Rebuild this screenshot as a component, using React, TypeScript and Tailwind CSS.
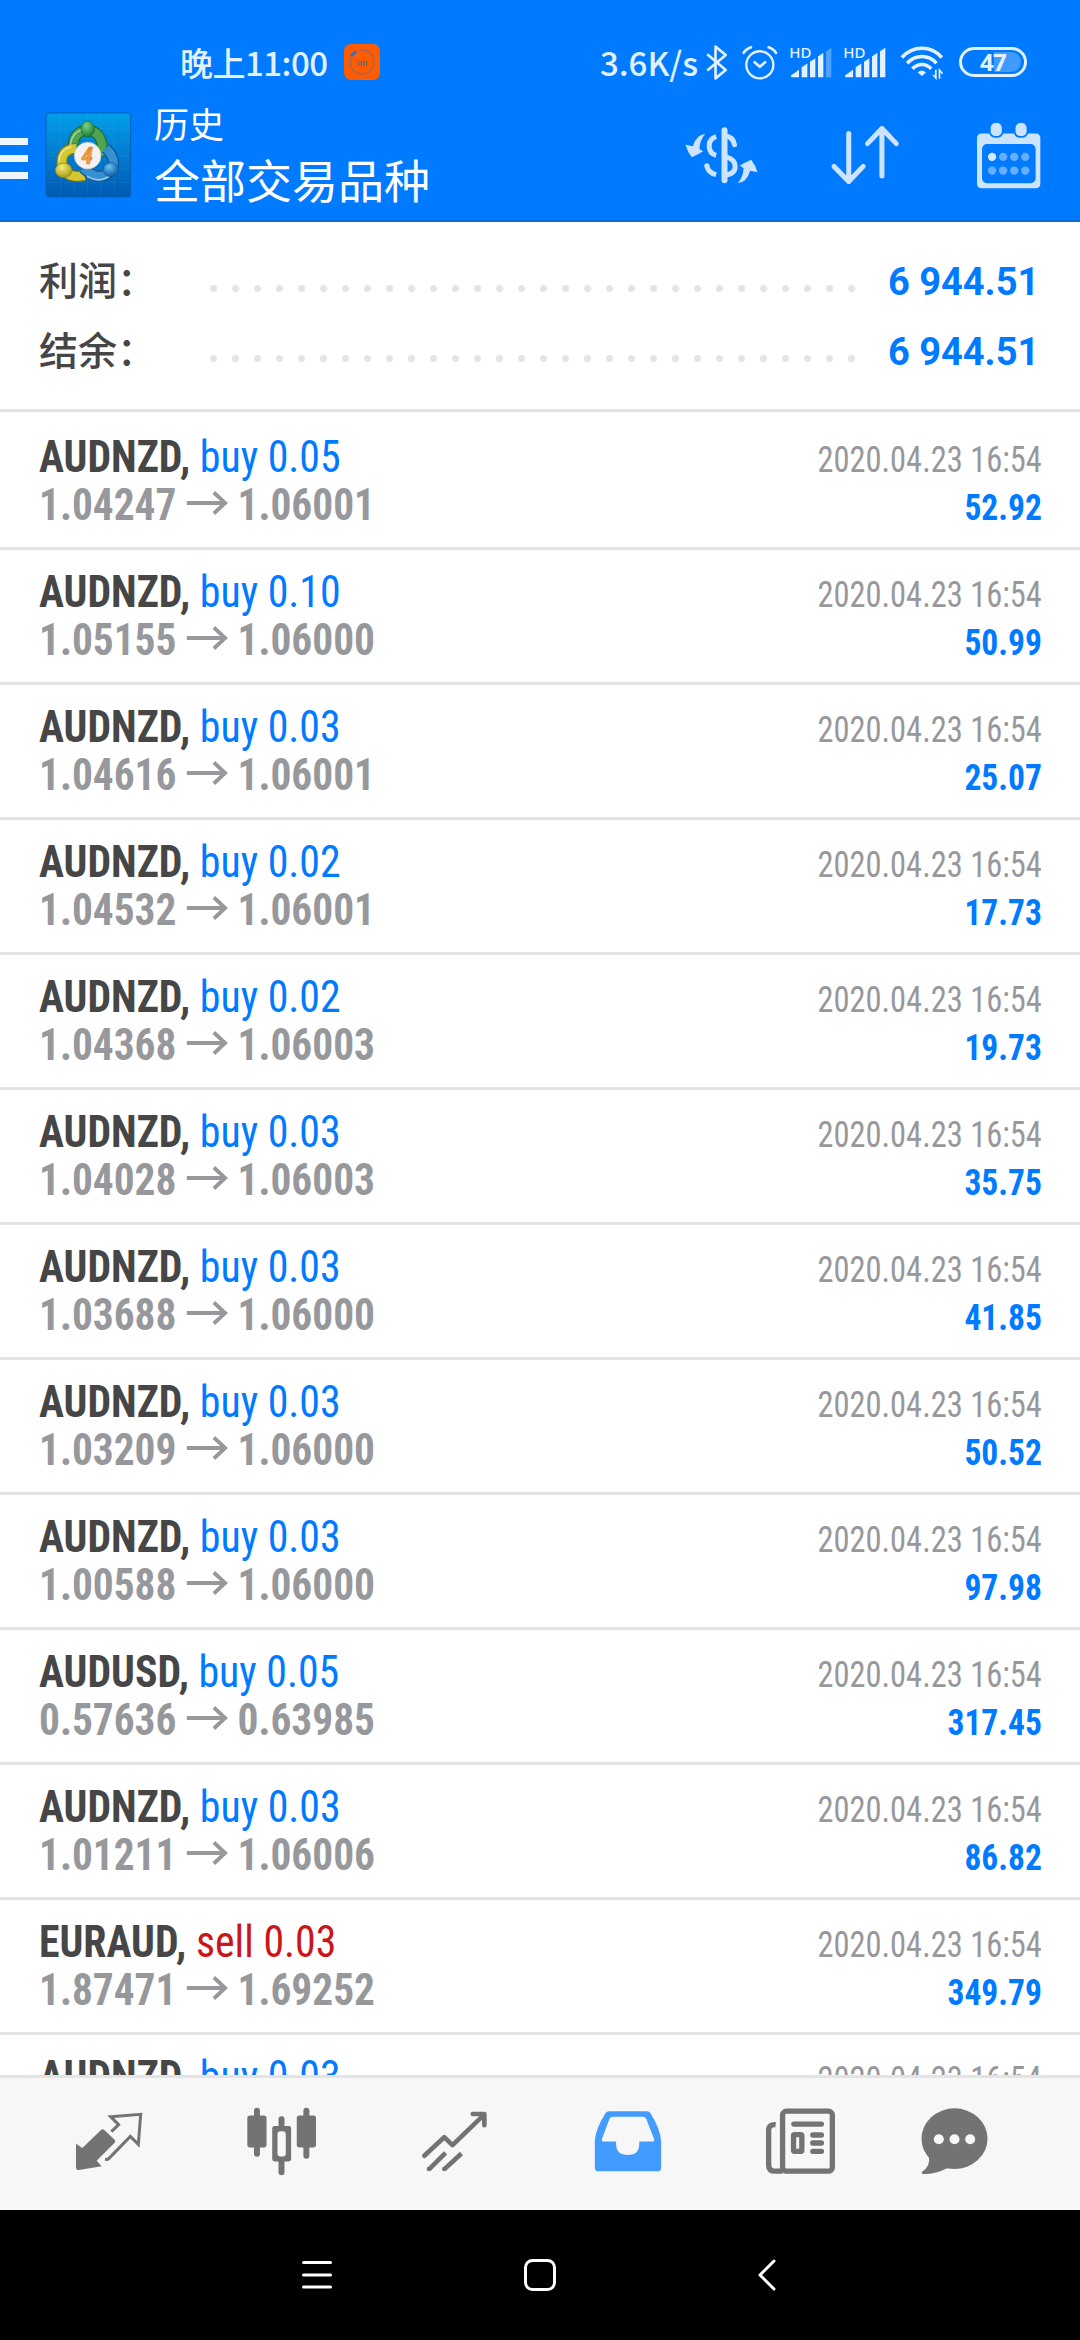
interface Deal {
  symbol: string
  side: 'buy' | 'sell'
  volume: string
  time: string
  open?: string
  close?: string
  profit?: string
}

const deals: Deal[] = [
  { symbol: 'AUDNZD', side: 'buy', volume: '0.05', open: '1.04247', close: '1.06001', time: '2020.04.23 16:54', profit: '52.92' },
  { symbol: 'AUDNZD', side: 'buy', volume: '0.10', open: '1.05155', close: '1.06000', time: '2020.04.23 16:54', profit: '50.99' },
  { symbol: 'AUDNZD', side: 'buy', volume: '0.03', open: '1.04616', close: '1.06001', time: '2020.04.23 16:54', profit: '25.07' },
  { symbol: 'AUDNZD', side: 'buy', volume: '0.02', open: '1.04532', close: '1.06001', time: '2020.04.23 16:54', profit: '17.73' },
  { symbol: 'AUDNZD', side: 'buy', volume: '0.02', open: '1.04368', close: '1.06003', time: '2020.04.23 16:54', profit: '19.73' },
  { symbol: 'AUDNZD', side: 'buy', volume: '0.03', open: '1.04028', close: '1.06003', time: '2020.04.23 16:54', profit: '35.75' },
  { symbol: 'AUDNZD', side: 'buy', volume: '0.03', open: '1.03688', close: '1.06000', time: '2020.04.23 16:54', profit: '41.85' },
  { symbol: 'AUDNZD', side: 'buy', volume: '0.03', open: '1.03209', close: '1.06000', time: '2020.04.23 16:54', profit: '50.52' },
  { symbol: 'AUDNZD', side: 'buy', volume: '0.03', open: '1.00588', close: '1.06000', time: '2020.04.23 16:54', profit: '97.98' },
  { symbol: 'AUDUSD', side: 'buy', volume: '0.05', open: '0.57636', close: '0.63985', time: '2020.04.23 16:54', profit: '317.45' },
  { symbol: 'AUDNZD', side: 'buy', volume: '0.03', open: '1.01211', close: '1.06006', time: '2020.04.23 16:54', profit: '86.82' },
  { symbol: 'EURAUD', side: 'sell', volume: '0.03', open: '1.87471', close: '1.69252', time: '2020.04.23 16:54', profit: '349.79' },
  { symbol: 'AUDNZD', side: 'buy', volume: '0.03', time: '2020.04.23 16:54' },
]

const totals = [
  { label: '利润：', value: '6 944.51' },
  { label: '结余：', value: '6 944.51' },
]

function SignalIcon({ weak = false }: { weak?: boolean }) {
  return (
    <svg viewBox="24 30 132 98" className="w-[44px] h-[33px] overflow-visible" fill="#e3f1ff">
      <text x="25" y="66" fontSize="45" fontWeight="500" fontFamily="Noto Sans, sans-serif">HD</text>
      <path d="M30 118 54 101V123H33Q30 123 30 120Z" />
      <path d="M62 93 79 82V123H62Z" />
      <path d="M87 77 103 66V123H87Z" />
      <path d="M111 61 127 50V123H111Z" />
      <path d="M135 45 151 35V123H135Z" opacity={weak ? 0.35 : 1} />
    </svg>
  )
}

function StatusBar() {
  return (
    <div className="flex items-center h-[80px] pt-[44px] pl-[180px] pr-[53px] text-[#e3f1ff] font-['Noto_Sans_CJK_SC',sans-serif] font-medium">
      <span className="w-[148px] text-[33px] leading-[36px] tracking-[-0.5px] whitespace-nowrap">晚上11:00</span>
      <svg viewBox="0 0 36 36" className="w-[36px] h-[36px] ml-[16px]">
        <rect width="36" height="36" rx="7" fill="#ff5c00" />
        <circle cx="18" cy="18" r="12" fill="none" stroke="#8a6a6a" strokeWidth="1.2" strokeDasharray="64 12" transform="rotate(-105 18 18)" />
        <path d="M7 12 12 7.500" stroke="#2d72c8" strokeWidth="3" />
        <text x="18" y="21.500" fontSize="9" fontWeight="700" textAnchor="middle" fill="#6b6a80" fontFamily="Inter, sans-serif">mi</text>
      </svg>
      <span className="ml-auto text-[33px] leading-[36px] whitespace-nowrap">3.6K/s</span>
      <svg viewBox="340 28 68 106" className="w-[23px] h-[35px] ml-[7px]" fill="none" stroke="#e3f1ff" strokeWidth="8" strokeLinejoin="round">
        <path d="M346 56 402 104 371 129V33L402 58 346 105" />
      </svg>
      <svg viewBox="450 28 112 106" className="w-[37px] h-[35px] ml-[13px]" fill="none" stroke="#e3f1ff" strokeWidth="7" strokeLinecap="round">
        <circle cx="507" cy="88" r="41" />
        <path d="M491 80 507 94 523 80M458 52Q464 41 480 35M556 52Q550 41 534 35" strokeWidth="8" />
      </svg>
      <div className="flex gap-[10px] ml-[11px]">
        <SignalIcon weak />
        <SignalIcon />
      </div>
      <svg viewBox="358 32 132 106" className="w-[44px] h-[35px] ml-[13px] mt-[1px]" fill="none" stroke="#e3f1ff" strokeWidth="11">
        <path d="M363 70Q388 42 424 42 460 42 484 70" />
        <path d="M379 87Q398 67 424 67 449 67 468 87" />
        <path d="M395 104Q408 91 424 91 439 91 452 104" />
        <path d="M411 115Q423 103 436 115L424 126Z" fill="#e3f1ff" stroke="none" />
        <path d="M466 107V132L458 122M477 134V108L486 119" strokeWidth="5" />
      </svg>
      <div className="relative flex items-center justify-center w-[68px] h-[30px] ml-[15px] rounded-full border-[3px] border-[#e3f1ff]">
        <div className="absolute right-[3px] top-[2px] w-[27px] h-[20px] rounded-r-full bg-[#409bff]" />
        <span className="relative font-['Noto_Sans'] font-bold text-[24px] leading-none tracking-[-0.7px]">47</span>
      </div>
    </div>
  )
}

function AppLogo() {
  return (
    <svg viewBox="42 36 264 264" className="w-[88px] h-[88px] ml-[16px]">
      <defs>
        <linearGradient id="tile" x1="0" y1="0" x2="0" y2="1">
          <stop offset="0" stopColor="#009eea" />
          <stop offset="1" stopColor="#0059b3" />
        </linearGradient>
        <radialGradient id="green" cx="0.4" cy="0.3" r="0.7">
          <stop offset="0" stopColor="#7cd08a" />
          <stop offset="1" stopColor="#1c7c33" />
        </radialGradient>
        <radialGradient id="yellow" cx="0.4" cy="0.3" r="0.7">
          <stop offset="0" stopColor="#f4ec7a" />
          <stop offset="1" stopColor="#a69c10" />
        </radialGradient>
        <radialGradient id="blue" cx="0.4" cy="0.3" r="0.7">
          <stop offset="0" stopColor="#6cc0f0" />
          <stop offset="1" stopColor="#0a5ea8" />
        </radialGradient>
      </defs>
      <rect x="48" y="42" width="254" height="252" rx="9" fill="url(#tile)" stroke="#0a5fae" strokeWidth="3" />
      <path d="M92 44V292M132 44V292M172 44V292M212 44V292M252 44V292M50 90H300M50 130H300M50 170H300M50 210H300M50 250H300" stroke="#fff" strokeOpacity="0.09" strokeWidth="2" />
      {/* three linked figures */}
      <path d="M129 158Q126 94 173 94 222 96 217 172" fill="none" stroke="#1d6a2c" strokeWidth="33" />
      <path d="M129 156Q126 94 173 94 222 96 217 170" fill="none" stroke="#4fa450" strokeWidth="26" />
      <path d="M138 148Q88 150 97 204 112 240 164 230" fill="none" stroke="#7c7612" strokeWidth="33" />
      <path d="M138 148Q88 150 97 204 112 240 164 230" fill="none" stroke="#d3c830" strokeWidth="26" />
      <path d="M228 148Q258 176 248 208 214 256 160 208" fill="none" stroke="#0d518f" strokeWidth="33" />
      <path d="M228 148Q258 176 248 208 214 256 160 208" fill="none" stroke="#3590d2" strokeWidth="26" />
      <path d="M121 140Q124 100 162 90M86 188Q90 150 124 144M170 232Q210 256 244 226" fill="none" stroke="#fff" strokeOpacity="0.5" strokeWidth="5" />
      <ellipse cx="173" cy="90" rx="20" ry="24" fill="url(#green)" stroke="#1d6a2c" strokeWidth="2" />
      <ellipse cx="101" cy="214" rx="25" ry="22" fill="url(#yellow)" stroke="#8a8414" strokeWidth="2" />
      <ellipse cx="242" cy="212" rx="23" ry="21" fill="url(#blue)" stroke="#0d518f" strokeWidth="2" />
      <circle cx="173" cy="170" r="40" fill="#f3f2f0" stroke="#c9c9c4" strokeWidth="2" />
      <text x="172" y="194" fontSize="70" fontWeight="700" textAnchor="middle" fill="#f5a347" stroke="#e07c1c" strokeWidth="2" fontFamily="Roboto Condensed, sans-serif" fontStyle="italic">4</text>
    </svg>
  )
}

function TitleBar() {
  return (
    <div className="flex items-center h-[134px] pr-[39px]">
      <div className="flex flex-col gap-[10px] pt-[6px]">
        <span className="w-[28px] h-[7px] bg-[#eef6ff]" />
        <span className="w-[28px] h-[7px] bg-[#eef6ff]" />
        <span className="w-[28px] h-[7px] bg-[#eef6ff]" />
      </div>
      <AppLogo />
      <div className="flex flex-col ml-[22px] pb-[4px] text-white font-['Noto_Sans_CJK_SC',sans-serif]">
        <span className="text-[35px] leading-[50px]">历史</span>
        <span className="text-[46px] leading-[60px]">全部交易品种</span>
      </div>

      <svg viewBox="14 30 224 174" className="w-[75px] h-[58px] ml-auto" fill="none" stroke="#cce4ff" strokeWidth="15">
        <path d="M135 43V193" strokeWidth="18" strokeLinecap="round" />
        <path d="M110 62Q89 68 89 90 89 112 110 118" />
        <path d="M110 176Q86 170 82 149" />
        <circle cx="82" cy="149" r="7.500" fill="#cce4ff" stroke="none" />
        <path d="M138 60Q160 62 165 86" strokeLinecap="round" />
        <path d="M138 122Q167 130 167 151 167 174 138 177" />
        <path d="M77 54Q50 56 40 91L18 86Q24 108 37 124 56 116 71 106L60 99Q60 74 77 54Z" fill="#cce4ff" stroke="none" />
        <path d="M77 54Q50 56 40 91L18 86Q24 108 37 124 56 116 71 106L60 99Q60 74 77 54Z" fill="#cce4ff" stroke="none" transform="rotate(180 126 127.500)" />
      </svg>
      <svg viewBox="450 30 212 184" className="w-[71px] h-[62px] ml-[71px]" fill="none" stroke="#cce4ff" strokeWidth="15" strokeLinecap="round" strokeLinejoin="round">
        <path d="M506 58V201M462 156 506 201 549 156M605 185V43M562 88 605 43 648 88" />
      </svg>
      <svg viewBox="888 18 194 200" className="w-[65px] h-[67px] ml-[75px]">
        <rect x="891" y="52" width="189" height="164" rx="13" fill="#cce4ff" />
        <rect x="906" y="84" width="160" height="117" rx="15" fill="#007aff" />
        <rect x="927" y="17" width="43" height="48" rx="17" fill="#007aff" />
        <rect x="1001" y="17" width="43" height="48" rx="17" fill="#007aff" />
        <rect x="932" y="21" width="33" height="39" rx="14" fill="#cce4ff" />
        <rect x="1006" y="21" width="33" height="39" rx="14" fill="#cce4ff" />
        <g fill="#66afff">
          <circle cx="936" cy="122" r="12.500" fill="#d6eaff" />
          <circle cx="969" cy="122" r="12.500" />
          <circle cx="1002" cy="122" r="12.500" />
          <circle cx="1035" cy="122" r="12.500" />
          <circle cx="936" cy="163" r="12.500" />
          <circle cx="969" cy="163" r="12.500" />
          <circle cx="1002" cy="163" r="12.500" />
          <circle cx="1035" cy="163" r="12.500" />
        </g>
      </svg>
    </div>
  )
}

function Totals() {
  return (
    <section className="h-[190px] pt-[24px] border-b-[3px] border-[#e4e4e4]">
      {totals.map((row) => (
        <div key={row.label} className="flex items-center h-[70px] pl-[39px] pr-[41px]">
          <span className="w-[171px] pb-[6px] font-['Noto_Sans_CJK_SC',sans-serif] font-medium text-[39px] leading-[60px] text-[#464646]">
            {row.label}
          </span>
          <span className="flex justify-between w-[645px] mt-[15px]">
            {Array.from({ length: 30 }, (_, i) => (
              <i key={i} className="w-[7px] h-[7px] rounded-full bg-[#e4e4e4]" />
            ))}
          </span>
          <span className="ml-auto pt-[2px] font-[Roboto] font-bold text-[39px] leading-[60px] text-[#007aff] scale-x-[0.975] origin-right">
            {row.value}
          </span>
        </div>
      ))}
    </section>
  )
}

function DealRow({ deal }: { deal: Deal }) {
  return (
    <li className="flex justify-between shrink-0 h-[135px] pl-[39px] pr-[38px] border-b-[3px] border-[#e4e4e4]">
      <div className="pt-[18px] text-[44px] leading-[48px] whitespace-nowrap">
        <p className="text-[#464646] scale-x-[0.95] origin-left">
          <b>{deal.symbol},</b>{' '}
          <span className={deal.side === 'buy' ? 'text-[#007aff]' : 'text-[#cc1518]'}>
            {deal.side} {deal.volume}
          </span>
        </p>
        {deal.open && (
          <p className="flex items-center font-bold text-[#97989c] scale-x-[0.94] origin-left">
            {deal.open}
            <svg viewBox="0 0 44 24" className="w-[44px] h-[24px] ml-[11px] mr-[10px] mt-[-4px]" fill="none" stroke="#97989c" strokeWidth="4">
              <path d="M0 12H42M29 1.500 41 12 29 22.500" />
            </svg>
            {deal.close}
          </p>
        )}
      </div>
      <div className="pt-[21px] text-right text-[37px] leading-[48px] whitespace-nowrap">
        <p className="text-[#97989c] scale-x-[0.877] origin-right">{deal.time}</p>
        {deal.profit && <p className="font-bold text-[#007aff] scale-x-[0.905] origin-right">{deal.profit}</p>}
      </div>
    </li>
  )
}

function TabBar() {
  return (
    <nav className="flex items-center h-[135px] pl-[22px] pb-[6px] border-t-[3px] border-[#e4e4e4] bg-[#f7f7f7] text-[#737373]">
      <span className="flex justify-center w-[173px]">
        <svg viewBox="44 36 204 180" className="w-[68px] h-[60px]" fill="currentColor">
          <path d="M47 134 66 147 122 93Q127 88 132 93L163 122Q167 127 163 131L109 185 124 202 56 213Q47 214 47 206Z" />
          <path d="M153 98 175 77 151 53 241 46 234 136 210 112 146 178Q142 182 134 181" fill="none" stroke="currentColor" strokeWidth="9" />
        </svg>
      </span>
      <span className="flex justify-center w-[173px]">
        <svg viewBox="556 20 214 212" className="w-[71px] h-[71px]" fill="currentColor">
          <rect x="560" y="48" width="58" height="96" rx="8" />
          <rect x="580" y="24" width="18" height="148" rx="9" />
          <rect x="709" y="48" width="58" height="96" rx="8" />
          <rect x="729" y="24" width="18" height="154" rx="9" />
          <rect x="635" y="79" width="57" height="107" rx="7" />
          <rect x="654" y="50" width="18" height="178" rx="9" />
          <rect x="651" y="95" width="25" height="76" rx="9" fill="#f7f7f7" />
        </svg>
      </span>
      <span className="flex justify-center w-[173px]">
        <svg viewBox="1082 28 202 190" className="w-[67px] h-[63px]" fill="none" stroke="currentColor" strokeWidth="14" strokeLinejoin="round">
          <path d="M1092 166 1152 110 1177 134 1270 44M1238 40H1273V74" strokeLinecap="round" />
          <path d="M1106 207 1156 157M1152 207 1204 159" />
          <circle cx="1106" cy="206" r="7" fill="currentColor" stroke="none" />
          <circle cx="1152" cy="206" r="7" fill="currentColor" stroke="none" />
        </svg>
      </span>
      <span className="flex justify-center w-[173px] text-[#429bff]">
        <svg viewBox="38 28 210 190" className="w-[70px] h-[63px]" fill="currentColor" fillRule="evenodd">
          <path d="M75 38Q79 32 86 32H200Q207 32 211 38 240 85 243 122V202Q243 213 232 213H54Q43 213 43 202V122Q45 85 75 38ZM98 48Q90 48 87 55L64 116Q63 123 70 123H107V130Q107 164 142 164 177 164 177 130V123H216Q223 123 222 116L198 55Q195 48 187 48Z" />
        </svg>
      </span>
      <span className="flex justify-center w-[173px]">
        <svg viewBox="556 20 214 204" className="w-[71px] h-[68px]" fill="none" stroke="currentColor" strokeWidth="16">
          <rect x="609" y="32" width="150" height="181" rx="12" />
          <path d="M588 73Q567 71 567 90V194Q567 213 587 213H609" />
          <path d="M643 71H726M700 104H726M700 128H726M700 153H726" strokeLinecap="round" />
          <rect x="642" y="103" width="25" height="50" rx="3" />
        </svg>
      </span>
      <span className="flex justify-center w-[134px]">
        <svg viewBox="1016 20 206 204" className="w-[69px] h-[68px]" fill="currentColor">
          <ellipse cx="1119" cy="115" rx="99" ry="91" />
          <path d="M1042 168Q1048 198 1022 214 1018 221 1028 221 1064 221 1100 202Z" />
          <g fill="#f7f7f7">
            <circle cx="1072" cy="117" r="15" />
            <circle cx="1119" cy="117" r="15" />
            <circle cx="1166" cy="117" r="15" />
          </g>
        </svg>
      </span>
    </nav>
  )
}

function SystemNav() {
  return (
    <div className="flex items-center h-[130px] pl-[302px] bg-black">
      <svg viewBox="0 0 30 32" className="w-[30px] h-[32px]" stroke="#fff" strokeWidth="3" strokeLinecap="round">
        <path d="M1.500 3.500H28.500M1.500 16H28.500M1.500 28H28.500" />
      </svg>
      <svg viewBox="0 0 32 32" className="w-[32px] h-[32px] ml-[192px]" fill="none" stroke="#fff" strokeWidth="3">
        <rect x="1.500" y="1.500" width="29" height="29" rx="7" />
      </svg>
      <svg viewBox="0 0 18 32" className="w-[18px] h-[32px] ml-[202px]" fill="none" stroke="#fff" strokeWidth="3" strokeLinecap="round" strokeLinejoin="round">
        <path d="M16 2 2 16 16 30" />
      </svg>
    </div>
  )
}

export default function App() {
  return (
    <div className="flex flex-col w-[1080px] h-[2340px] overflow-hidden bg-white">
      <header className="h-[222px] border-b-2 border-[#0a6cd6] bg-[#007aff]">
        <StatusBar />
        <div className="mt-[8px]">
          <TitleBar />
        </div>
      </header>
      <Totals />
      <ul className="flex flex-col flex-1 min-h-0 pt-[3px] overflow-hidden font-['Roboto_Condensed',sans-serif]">
        {deals.map((deal, i) => (
          <DealRow key={i} deal={deal} />
        ))}
      </ul>
      <TabBar />
      <SystemNav />
    </div>
  )
}
